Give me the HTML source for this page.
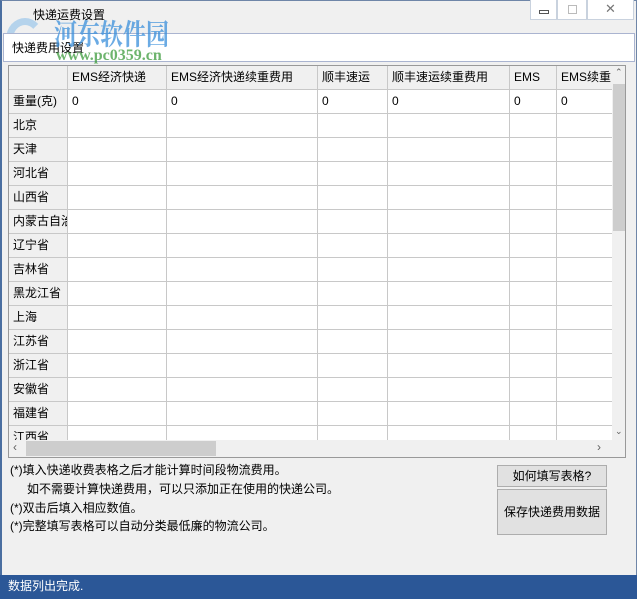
<!DOCTYPE html>
<html><head><meta charset="utf-8"><style>
*{margin:0;padding:0;box-sizing:border-box}
body{width:637px;height:599px;background:#f0f0f0;font-family:"Liberation Sans","Noto Sans CJK SC",sans-serif;font-size:12px;color:#000;position:relative;overflow:hidden}
.win{position:absolute;left:0;top:0;width:637px;height:599px;border:1px solid #6f86a8;border-left:2px solid #4a6ea0}
.title{position:absolute;left:33px;top:6px;font-size:12px}
.ctl{position:absolute;top:0;height:20px;border:1px solid #c9d2de;border-top:none;background:#fff}
.grp{position:absolute;left:3px;top:33px;width:632px;height:29px;border:1px solid #aab4d0;background:#fff}
.grid{position:absolute;left:8px;top:65px;width:618px;height:393px;border:1px solid #999;background:#fff;overflow:hidden}
.c{position:absolute;border-right:1px solid #c8c8c8;border-bottom:1px solid #c8c8c8;height:24px;line-height:23px;padding-left:4px;white-space:nowrap;overflow:hidden}
.h{background:#f0f0f0}
.txt{position:absolute;left:10px;font-size:12px;white-space:nowrap}
.btn{position:absolute;left:497px;width:110px;border:1px solid #adadad;background:#e1e1e1;text-align:center;font-size:12px}
.status{position:absolute;left:0;top:575px;width:637px;height:24px;background:#2b5797;color:#fff;padding-left:8px;line-height:22px}
.wm{position:absolute;font-family:"Liberation Serif","Noto Serif CJK SC",serif;font-weight:bold;opacity:.75;white-space:nowrap}
</style></head><body>
<div class="win"></div>
<div style="position:absolute;left:6px;top:18px;width:38px;height:42px;border-radius:50%;border:7px solid #8ec0ea;border-right-color:transparent;opacity:.6"></div>
<div style="position:absolute;left:14px;top:48px;width:20px;height:14px;background:#f6a45a;opacity:.6;border-radius:4px"></div>
<div class="title">快递运费设置</div>
<div class="ctl" style="left:530px;width:27px"><div style="position:absolute;left:8px;top:10px;width:10px;height:4px;border:1px solid #555"></div></div>
<div class="ctl" style="left:557px;width:30px"><div style="position:absolute;left:10px;top:5px;width:9px;height:9px;border:1px solid #bbb"></div></div>
<div class="ctl" style="left:587px;width:47px;text-align:center;color:#777;font-size:13px;line-height:18px">✕</div>
<div class="grp"><span style="position:absolute;left:8px;top:5px">快递费用设置</span></div>
<div class="wm" style="left:54px;top:12px;font-size:23px;color:#3a8fdb;transform:scaleY(1.25);transform-origin:top left">河东软件园</div>
<div class="wm" style="left:56px;top:47px;font-size:16px;color:#3d9b3d">www.pc0359.cn</div>
<div class="grid" id="g"></div>
<div class="txt" style="top:461px">(*)填入快递收费表格之后才能计算时间段物流费用。</div>
<div class="txt" style="top:480px;left:27px">如不需要计算快递费用，可以只添加正在使用的快递公司。</div>
<div class="txt" style="top:499px">(*)双击后填入相应数值。</div>
<div class="txt" style="top:517px">(*)完整填写表格可以自动分类最低廉的物流公司。</div>
<div class="btn" style="top:465px;height:22px;line-height:20px">如何填写表格?</div>
<div class="btn" style="top:489px;height:46px;line-height:44px">保存快递费用数据</div>
<div class="status">数据列出完成.</div>
<script>
var g=document.getElementById('g');
var xs=[0,59,158,309,379,501,548,604];
var hd=['','EMS经济快递','EMS经济快递续重费用','顺丰速运','顺丰速运续重费用','EMS','EMS续重'];
var rows=['重量(克)','北京','天津','河北省','山西省','内蒙古自治','辽宁省','吉林省','黑龙江省','上海','江苏省','浙江省','安徽省','福建省','江西省'];
var h='';
for(var i=0;i<7;i++)h+='<div class="c h" style="left:'+xs[i]+'px;top:0;width:'+(xs[i+1]-xs[i])+'px">'+hd[i]+'</div>';
for(var r=0;r<rows.length;r++){var t=24+r*24;
for(var i=0;i<7;i++){var v=i==0?rows[r]:(r==0?'0':'');
h+='<div class="c'+(i==0?' h':'')+'" style="left:'+xs[i]+'px;top:'+t+'px;width:'+(xs[i+1]-xs[i])+'px">'+v+'</div>';}}
h+='<div style="position:absolute;left:0;top:374px;width:604px;height:17px;background:#f0f0f0"><div style="position:absolute;left:17px;top:1px;width:190px;height:15px;background:#cdcdcd"></div><span style="position:absolute;left:4px;top:0;color:#606060">‹</span><span style="position:absolute;left:588px;top:0;color:#606060">›</span></div>';
h+='<div style="position:absolute;left:603px;top:0;width:14px;height:393px;background:#f0f0f0"><div style="position:absolute;left:1px;top:18px;width:13px;height:147px;background:#cdcdcd"></div><span style="position:absolute;left:3px;top:1px;font-size:9px;color:#606060">⌃</span><span style="position:absolute;left:3px;top:360px;font-size:9px;color:#606060">⌄</span></div>';
h+='<div style="position:absolute;left:603px;top:374px;width:14px;height:19px;background:#f0f0f0"></div>';
g.innerHTML=h;
</script>
</body></html>
